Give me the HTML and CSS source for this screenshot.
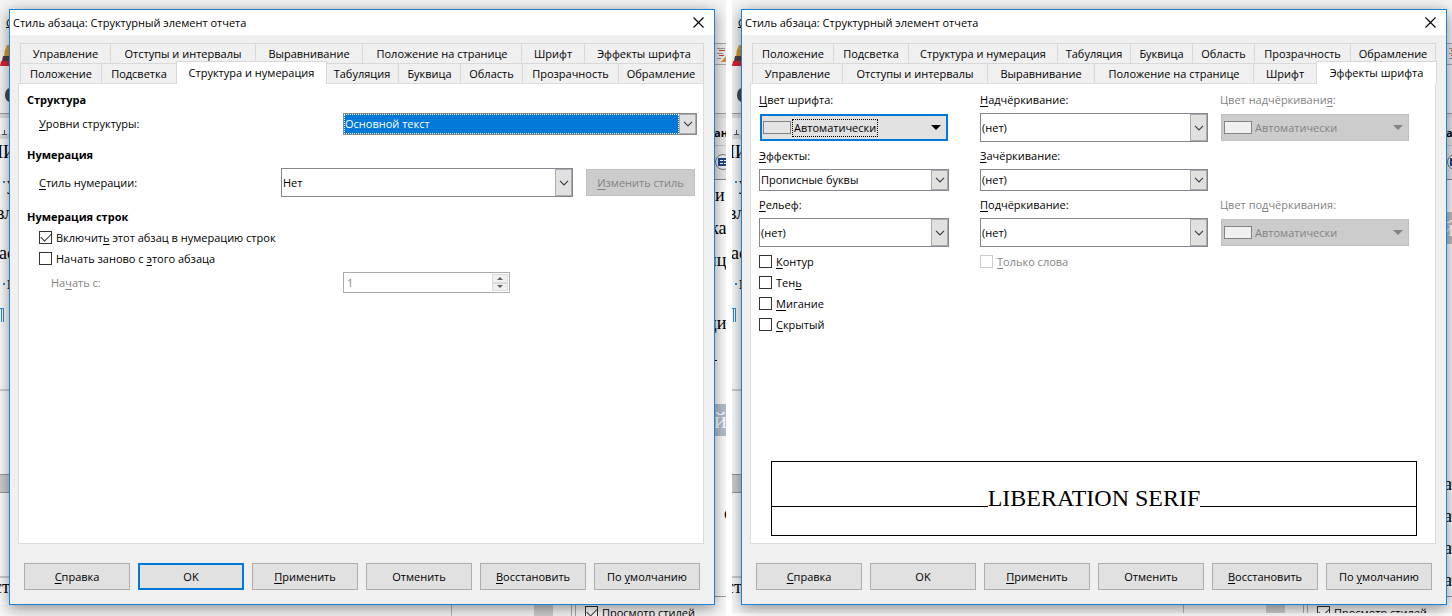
FILE: index.html
```html
<!DOCTYPE html>
<html lang="ru">
<head>
<meta charset="utf-8">
<title>Стиль абзаца: Структурный элемент отчета</title>
<link rel="stylesheet" href="styles.css">
</head>
<body>
<svg class="defs" aria-hidden="true">
  <symbol id="chevron" viewBox="0 0 10 6"><path d="M1 .8 5 4.8 9 .8" fill="none" stroke="#404040" stroke-width="1.2"/></symbol>
  <symbol id="close" viewBox="0 0 11 11"><path d="M.5.5l10 10M10.5.5l-10 10" fill="none" stroke="#000" stroke-width="1.1"/></symbol>
  <symbol id="down" viewBox="0 0 10 5"><path d="M0 0h10L5 5z" fill="currentColor"/></symbol>
  <symbol id="up" viewBox="0 0 10 5"><path d="M0 5h10L5 0z" fill="currentColor"/></symbol>
  <symbol id="document" viewBox="0 0 726 616">
    <rect width="726" height="113" fill="#f5f5f5"/>
    <rect y="113" width="726" height="1" fill="#a0a0a0"/>
    <rect y="114" width="726" height="4" fill="#dedede"/>
    <rect y="118" width="726" height="20" fill="#fafafa"/>
    <rect y="138" width="726" height="478" fill="#fcfcfc"/>
    <rect y="134" width="9" height="5" fill="#e0e0e0"/>
    <path d="M2 134.500h5M4.500 130v4" stroke="#555"/>
    <text x="6" y="27" class="doc-ui">С</text>
    <path d="M6 27.500h4" stroke="#000"/>
    <path d="M5 50l2-5h3v11H4z" fill="#d99a2b"/>
    <path d="M3 56h7v5H2z" fill="#5b3d3d"/>
    <path d="M1 61h9v5H0z" fill="#d8232f"/>
    <ellipse cx="10" cy="95" rx="5" ry="7" fill="#4a4a4a"/>
    <text x="-10" y="158" class="doc-text">ПИ</text>
    <text x="7" y="190" class="doc-text">у</text>
    <text x="-4" y="219" class="doc-text">вл</text>
    <text x="-1" y="259" class="doc-text">ас</text>
    <text x="7" y="289" class="doc-text">г</text>
    <path d="M3 181h2v2H3zM3 283h2v2H3z" fill="#2a8dd4"/>
    <path d="M0 308.500h4M1.500 308v14M3.500 308v14" stroke="#2a8dd4"/>
    <rect y="389" width="9" height="2" fill="#cfcfcf"/>
    <rect y="474" width="9" height="19" fill="#cecece"/>
    <path d="M0 474.500h9M0 492.500h9" stroke="#999"/>
    <rect y="576" width="9" height="2" fill="#cfcfcf"/>
    <text x="-6" y="593" class="doc-text">ст</text>
    <g>
      <rect x="715" y="43" width="11" height="22" fill="#ececec"/>
      <path d="M715 43.500h11M715 64.500h11" stroke="#aaa"/>
      <path d="M717 48.500h8M717 53.500h6M717 58.500h4" stroke="#999"/>
      <path d="M719 50.500h6M719 55.500h5" stroke="#dc3c37"/>
      <path d="M721 62l5-6v6z" fill="#e38b35"/>
      <rect x="715" y="65" width="11" height="48" fill="#f0f0f0"/>
      <rect x="715" y="118" width="11" height="61" fill="#e8e8e8"/>
      <path d="M715 145.500h11" stroke="#c8c8c8"/>
      <circle cx="723" cy="162" r="7.500" fill="#f2f2f2" stroke="#777"/>
      <rect x="718" y="158" width="9" height="8" fill="#214584"/>
      <path d="M720 160.500h3M724 160.500h3M720 163.500h3M724 163.500h3" stroke="#fff"/>
      <path d="M715 179.500h11" stroke="#888"/>
      <text x="714" y="137" class="doc-ui doc-bold">ан</text>
    </g>
    <rect y="605" width="726" height="11" fill="#f7f7f7"/>
    <path d="M451.500 605v11" stroke="#b5b5b5"/>
    <rect x="534" y="605" width="19" height="11" fill="#cdcdcd"/>
    <path d="M571.500 605v11M575.500 605v11" stroke="#aaa"/>
    <path d="M715 596.500h11" stroke="#999"/>
  </symbol>
</svg>

<main class="screens">
  <section class="screen">
    <div class="backdrop">
      <svg class="canvas" width="726" height="616" aria-hidden="true">
        <use href="#document" width="726" height="616"/>
        <text x="715" y="201" class="doc-text">и</text>
        <text x="710" y="234" class="doc-text">ка</text>
        <text x="707" y="266" class="doc-text">иц</text>
        <text x="707" y="329" class="doc-text">ци</text>
        <path d="M715 360.500h2" stroke="#000"/>
        <rect x="715" y="404" width="11" height="32" fill="#b3c0ce"/>
        <text x="714" y="428" class="doc-head">й</text>
        <text x="724" y="519" class="doc-text">с</text>
      </svg>
      <label class="check preview-check"><input type="checkbox" checked>Просмотр стилей</label>
    </div>
    <div class="dialog" role="dialog" aria-labelledby="title-a">
      <header class="titlebar">
        <h1 id="title-a">Стиль абзаца: Структурный элемент отчета</h1>
        <button class="close" aria-label="Закрыть"><svg width="11" height="11"><use href="#close"/></svg></button>
      </header>
      <div class="tabs" role="tablist">
        <div class="tabrow tabrow-six">
          <button class="tab" role="tab">Управление</button><button class="tab" role="tab">Отступы и интервалы</button><button class="tab" role="tab">Выравнивание</button><button class="tab" role="tab">Положение на странице</button><button class="tab" role="tab">Шрифт</button><button class="tab" role="tab">Эффекты шрифта</button>
        </div>
        <div class="tabrow tabrow-eight">
          <button class="tab" role="tab">Положение</button><button class="tab" role="tab">Подсветка</button><button class="tab active" role="tab" aria-selected="true">Структура и нумерация</button><button class="tab" role="tab">Табуляция</button><button class="tab" role="tab">Буквица</button><button class="tab" role="tab">Область</button><button class="tab" role="tab">Прозрачность</button><button class="tab" role="tab">Обрамление</button>
        </div>
      </div>
      <div class="panel" role="tabpanel">
        <section class="group">
          <h2>Структура</h2>
          <div class="row">
            <label for="level"><u>У</u>ровни структуры:</label>
            <span class="combo combo-level focused"><select id="level"><option>Основной текст</option></select><span class="arrow"><svg width="10" height="6"><use href="#chevron"/></svg></span></span>
          </div>
        </section>
        <section class="group">
          <h2>Нумерация</h2>
          <div class="row">
            <label for="numstyle"><u>С</u>тиль нумерации:</label>
            <span class="combo combo-number tall"><select id="numstyle"><option>Нет</option></select><span class="arrow"><svg width="10" height="6"><use href="#chevron"/></svg></span></span>
            <button class="button edit" disabled><span><u>И</u>зменить стиль</span></button>
          </div>
        </section>
        <section class="group lines">
          <h2>Нумерация строк</h2>
          <label class="check"><input type="checkbox" checked><span>Включит<u>ь</u> этот абзац в нумерацию строк</span></label>
          <label class="check"><input type="checkbox"><span>Начать заново с <u>э</u>того абзаца</span></label>
          <div class="row start">
            <label for="start">На<u>ч</u>ать с:</label>
            <span class="spin"><input id="start" type="text" value="1" disabled><span class="steps"><span><svg width="6" height="3"><use href="#up"/></svg></span><span><svg width="6" height="3"><use href="#down"/></svg></span></span></span>
          </div>
        </section>
      </div>
      <footer class="actions">
        <button class="button"><span><u>С</u>правка</span></button>
        <button class="button default">OK</button>
        <button class="button"><span><u>П</u>рименить</span></button>
        <button class="button">Отменить</button>
        <button class="button"><span><u>В</u>осстановить</span></button>
        <button class="button"><span>По <u>у</u>молчанию</span></button>
      </footer>
    </div>
  </section>

  <section class="screen second">
    <div class="backdrop">
      <svg class="canvas" width="726" height="616" aria-hidden="true">
        <use href="#document" width="726" height="616"/>
        <rect x="715" y="212" width="11" height="32" fill="#b3c0ce"/>
        <text x="709" y="236" class="doc-head">й</text>
        <text x="712" y="490" class="doc-text">ат</text>
        <text x="712" y="522" class="doc-text">ат</text>
        <text x="712" y="554" class="doc-text">ат</text>
        <text x="712" y="586" class="doc-text">ат</text>
      </svg>
      <label class="check preview-check"><input type="checkbox" checked>Просмотр стилей</label>
    </div>
    <div class="dialog" role="dialog" aria-labelledby="title-b">
      <header class="titlebar">
        <h1 id="title-b">Стиль абзаца: Структурный элемент отчета</h1>
        <button class="close" aria-label="Закрыть"><svg width="11" height="11"><use href="#close"/></svg></button>
      </header>
      <div class="tabs" role="tablist">
        <div class="tabrow tabrow-eight">
          <button class="tab" role="tab">Положение</button><button class="tab" role="tab">Подсветка</button><button class="tab" role="tab">Структура и нумерация</button><button class="tab" role="tab">Табуляция</button><button class="tab" role="tab">Буквица</button><button class="tab" role="tab">Область</button><button class="tab" role="tab">Прозрачность</button><button class="tab" role="tab">Обрамление</button>
        </div>
        <div class="tabrow tabrow-six">
          <button class="tab" role="tab">Управление</button><button class="tab" role="tab">Отступы и интервалы</button><button class="tab" role="tab">Выравнивание</button><button class="tab" role="tab">Положение на странице</button><button class="tab" role="tab">Шрифт</button><button class="tab active" role="tab" aria-selected="true">Эффекты шрифта</button>
        </div>
      </div>
      <div class="panel" role="tabpanel">
        <div class="effects">
          <div class="column">
            <label for="fontcolor"><u>Ц</u>вет шрифта:</label>
            <button id="fontcolor" class="color current"><i class="swatch"></i><span class="name">Автоматически</span><svg width="10" height="5"><use href="#down"/></svg></button>
            <label for="effects"><u>Э</u>ффекты:</label>
            <span class="combo"><select id="effects"><option>Прописные буквы</option></select><span class="arrow"><svg width="10" height="6"><use href="#chevron"/></svg></span></span>
            <label for="relief"><u>Р</u>ельеф:</label>
            <span class="combo tall"><select id="relief"><option>(нет)</option></select><span class="arrow"><svg width="10" height="6"><use href="#chevron"/></svg></span></span>
            <div class="checks">
              <label class="check"><input type="checkbox"><span><u>К</u>онтур</span></label>
              <label class="check"><input type="checkbox"><span>Тен<u>ь</u></span></label>
              <label class="check"><input type="checkbox"><span><u>М</u>игание</span></label>
              <label class="check"><input type="checkbox"><span><u>С</u>крытый</span></label>
            </div>
          </div>
          <div class="column middle">
            <label for="overline"><u>Н</u>адчёркивание:</label>
            <span class="combo tall"><select id="overline"><option>(нет)</option></select><span class="arrow"><svg width="10" height="6"><use href="#chevron"/></svg></span></span>
            <label for="strike"><u>З</u>ачёркивание:</label>
            <span class="combo"><select id="strike"><option>(нет)</option></select><span class="arrow"><svg width="10" height="6"><use href="#chevron"/></svg></span></span>
            <label for="underline"><u>П</u>одчёркивание:</label>
            <span class="combo tall"><select id="underline"><option>(нет)</option></select><span class="arrow"><svg width="10" height="6"><use href="#chevron"/></svg></span></span>
            <div class="checks">
              <label class="check muted"><input type="checkbox" disabled><span><u>Т</u>олько слова</span></label>
            </div>
          </div>
          <div class="column split">
            <div class="field">
              <label class="muted" for="overcolor">Цвет надчёркивани<u>я</u>:</label>
              <button id="overcolor" class="color" disabled><i class="swatch"></i><span class="name">Автоматически</span><svg width="10" height="5"><use href="#down"/></svg></button>
            </div>
            <div class="field">
              <label class="muted" for="undercolor">Цвет по<u>д</u>чёркивания:</label>
              <button id="undercolor" class="color" disabled><i class="swatch"></i><span class="name">Автоматически</span><svg width="10" height="5"><use href="#down"/></svg></button>
            </div>
          </div>
        </div>
        <div class="sample"><span>LIBERATION SERIF</span></div>
      </div>
      <footer class="actions">
        <button class="button"><span><u>С</u>правка</span></button>
        <button class="button">OK</button>
        <button class="button"><span><u>П</u>рименить</span></button>
        <button class="button">Отменить</button>
        <button class="button"><span><u>В</u>осстановить</span></button>
        <button class="button"><span>По <u>у</u>молчанию</span></button>
      </footer>
    </div>
  </section>
</main>
</body>
</html>
```
FILE: styles.css
```css
* { box-sizing: border-box; }

body {
  margin: 0;
  background: #fff;
  color: #000;
  font: 11px/18px "Open Sans", "Noto Sans", sans-serif;
}

button, input, select { font: inherit; color: inherit; }
button { padding: 0; }
h1, h2 { margin: 0; font-size: 11px; line-height: 20px; }
h1 { font-weight: 400; }
u { text-underline-offset: 2px; text-decoration-thickness: 1px; }
.defs { display: none; }

/* Two screens side by side */
.screens {
  display: grid;
  grid-template-columns: minmax(0, 726fr) minmax(0, 720fr);
  gap: 6px;
  min-height: 100vh;
}
.screen {
  position: relative;
  display: flex;
  padding: 9px 11px 11px 9px;
  overflow: hidden;
}
.second { padding-right: 5px; }

/* Editor window seen behind the dialog */
.backdrop { position: absolute; inset: 0; overflow: hidden; }
.second .backdrop { bottom: 3px; }
.canvas { display: block; }
.doc-text { font: 18px "Liberation Serif", serif; }
.doc-head { font: 24px "Liberation Serif", serif; fill: #fff; }
.doc-ui { font: 11px "Open Sans", sans-serif; }
.doc-bold { font-weight: 700; }
.preview-check { position: absolute; left: 585px; top: 602px; }

/* Dialog */
.dialog {
  position: relative;
  flex: 1;
  display: flex;
  flex-direction: column;
  min-width: 0;
  background: #f0f0f0;
  border: 1px solid #1883d7;
  box-shadow: 0 3px 14px rgba(0, 0, 0, .45);
}
.titlebar {
  display: flex;
  align-items: center;
  justify-content: space-between;
  height: 25px;
  padding: 0 10px 0 3px;
  background: #fff;
}
.close { display: flex; border: 0; background: none; }

/* Tabs */
.tabs { margin: 8px 10px 0; }
.tabrow { display: grid; height: 20px; border-left: 1px solid #d9d9d9; }
.tabrow-six { grid-template-columns: 90fr 145fr 107fr 159fr 63fr 119fr; }
.tabrow-eight { grid-template-columns: 81fr 75fr 149fr 73fr 62fr 62fr 96fr 85fr; }
.tab {
  min-width: 0;
  border: solid #d9d9d9;
  border-width: 1px 1px 0 0;
  background: #f0f0f0;
  white-space: nowrap;
}
.tab.active {
  z-index: 1;
  margin: -2px -1px -1px;
  padding-bottom: 1px;
  border-left-width: 1px;
  background: #fff;
}

.panel {
  flex: 1;
  display: flex;
  flex-direction: column;
  margin: 0 10px 0 8px;
  padding: 6px 6px 7px 8px;
  background: #fff;
  border: 1px solid #dcdcdc;
}

/* Combo boxes */
.combo {
  position: relative;
  display: flex;
  height: 22px;
  border: 1px solid #828790;
  background: #fff;
}
.tall { height: 29px; }
.combo select {
  flex: 1;
  min-width: 0;
  padding: 0 20px 0 1px;
  border: 0;
  outline: 0;
  appearance: none;
  background: transparent;
}
.arrow {
  position: absolute;
  inset: 0 0 0 auto;
  display: grid;
  place-items: center;
  width: 17px;
  border: 1px solid #acacac;
  background: #e1e1e1;
  pointer-events: none;
}
.focused select {
  margin-right: 17px;
  border: 1px dotted #fff;
  padding: 0;
  background: #0078d7;
  color: #fff;
}

/* Structure page */
.group { display: flex; flex-direction: column; gap: 3px; margin-bottom: 10px; }
.row { display: flex; align-items: center; padding-left: 12px; }
.row > label { flex: 1; }
.combo-level { width: 354px; }
.combo-number { width: 292px; }
.edit { width: 109px; margin: 0 2px 0 13px; }
.lines { gap: 0; }
.lines > .check { margin-left: 12px; }
.start { margin-top: 3px; padding-left: 24px; color: #838383; }
.spin {
  display: flex;
  width: 167px;
  height: 21px;
  margin-right: 187px;
  padding: 1px;
  border: 1px solid #acacac;
}
.spin input { flex: 1; min-width: 0; padding: 0 2px; border: 0; background: #fff; }
.steps { display: grid; grid-template-rows: 1fr 1fr; width: 16px; color: #606060; }
.steps span { display: grid; place-items: center; border: 1px solid #dcdcdc; background: #f0f0f0; }

/* Check boxes */
.check { display: flex; align-items: center; gap: 4px; height: 21px; }
.check input {
  flex: none;
  display: grid;
  place-items: center;
  width: 13px;
  height: 13px;
  margin: 0;
  appearance: none;
  border: 1px solid #333;
  background: #fff;
}
.check input:checked::after {
  content: "";
  width: 9px;
  height: 5px;
  margin-bottom: 3px;
  border: solid #333;
  border-width: 0 0 1px 1px;
  transform: rotate(-45deg);
}
.check input:disabled { border-color: #ccc; }
.muted { color: #838383; }

/* Effects page: three columns separated by unequal gutters */
.effects { display: grid; grid-template-columns: 190fr 31fr 228fr 12fr 190fr 19fr; }
.column, .field { display: flex; flex-direction: column; gap: 4px; min-width: 0; }
.column label:not(.check) { line-height: 19px; white-space: nowrap; }
.middle { grid-column: 3; }
.split { grid-column: 5; gap: 53px; }
.color {
  display: flex;
  align-items: center;
  height: 27px;
  margin: 1px;
  padding: 0 5px 0 1px;
  border: 2px solid #0078d7;
  background: #e1e1e1;
}
.color:disabled { padding: 0 5px 0 2px; border: 1px solid #bfbfbf; background: #ccc; color: #838383; }
.swatch { width: 28px; height: 13px; border: 1px solid #838383; background: #f0f0f0; }
.name { margin: 0 auto 0 2px; padding: 0 1px; line-height: 16px; }
.current .name { outline: 1px dotted #000; }
.current .swatch { background: #e4e4e4; }

.sample {
  display: flex;
  justify-content: center;
  align-items: flex-end;
  height: 75px;
  margin: auto 12px 0 12px;
  border: 1px solid #000;
  padding-bottom: 22px;
  font: 24px/30px "Liberation Serif", serif;
}
.sample::before, .sample::after { content: ""; flex: 1; margin-bottom: 6px; border-bottom: 1px solid #000; }

/* Buttons */
.button {
  height: 27px;
  border: 1px solid #adadad;
  background: #e1e1e1;
  white-space: nowrap;
}
.button:disabled { border-color: #bfbfbf; background: #ccc; color: #838383; }
.default { border: 2px solid #0078d7; }
.actions {
  display: grid;
  grid-template-columns: repeat(6, minmax(0, 1fr));
  gap: 8px;
  padding: 19px 14px 14px;
}
```
